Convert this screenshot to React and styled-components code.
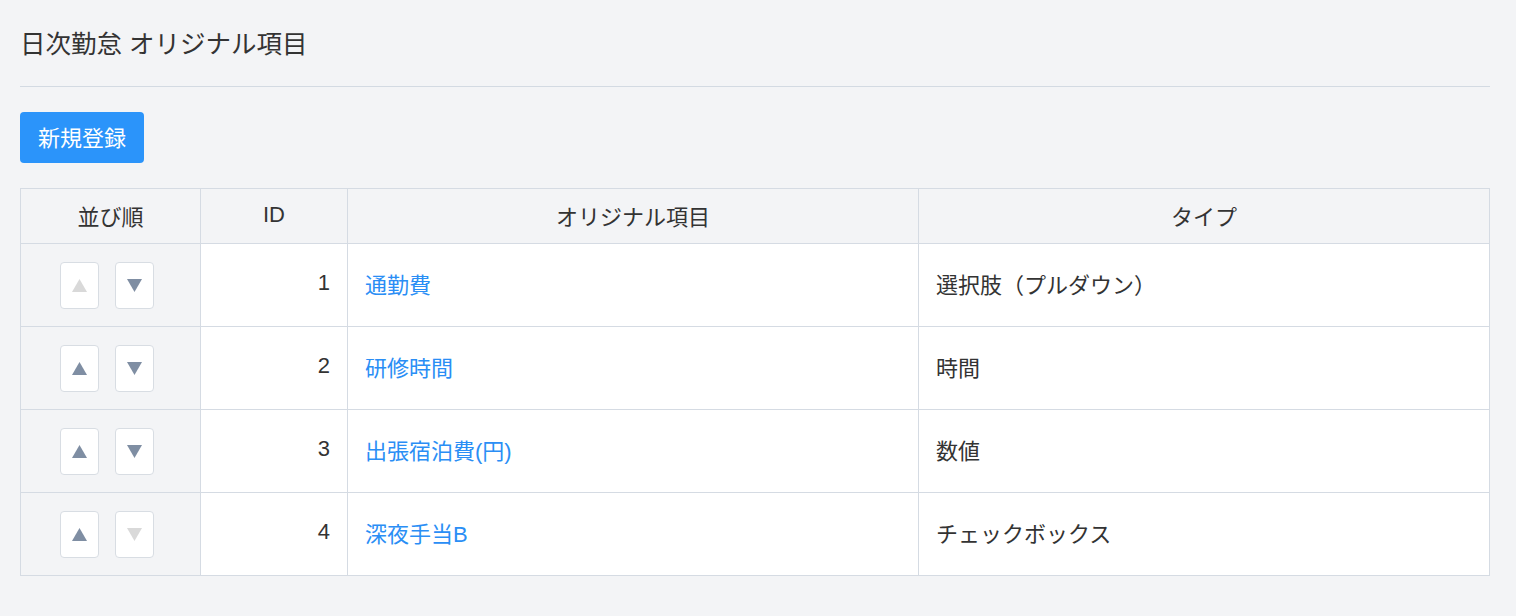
import React from "react";
import styled, { createGlobalStyle } from "styled-components";

const GlobalStyle = createGlobalStyle`
	body {
		margin: 0;
		background: #f3f4f6;
		color: #333;
		font-family: "Liberation Sans", "Noto Sans CJK JP", sans-serif;
	}
`;

const Page = styled.div`
	padding: 26px 26px 40px 20px;
`;

const Title = styled.h1`
	margin: 0;
	font-size: 25.5px;
	font-weight: 400;
	line-height: 36px;
	color: #333;
`;

const Divider = styled.hr`
	margin: 24px 0 25px;
	border: 0;
	border-top: 1px solid #d3dae2;
`;

const PrimaryButton = styled.button`
	height: 51px;
	padding: 0 18px 3px;
	border: 0;
	border-radius: 4px;
	background: #2b94fa;
	color: #fff;
	font-family: inherit;
	font-size: 22px;
	cursor: pointer;
`;

const Table = styled.table`
	margin-top: 25px;
	width: 100%;
	table-layout: fixed;
	border-collapse: collapse;
	font-size: 22px;
`;

const Th = styled.th`
	height: 52px;
	padding: 0 16px 2px;
	border: 1px solid #d5dbe3;
	background: #f3f4f6;
	font-weight: 400;
	text-align: center;
`;

const Td = styled.td`
	height: 78px;
	padding: 0 17px 4px;
	border: 1px solid #d5dbe3;
	background: ${(p) => (p.$muted ? "#f3f4f6" : "#fff")};
	text-align: ${(p) => p.$align || "left"};
`;

const SortButtons = styled.div`
	display: flex;
	justify-content: center;
	gap: 16px;
	padding-right: 7px;
	margin-top: 4px;
`;

const SortButton = styled.button`
	width: 39px;
	height: 47px;
	padding: 0;
	display: flex;
	align-items: center;
	justify-content: center;
	background: #fff;
	border: 1px solid #d8dde3;
	border-radius: 4px;
	color: ${(p) => (p.disabled ? "#d9d9d9" : "#7f8ea3")};
	cursor: ${(p) => (p.disabled ? "default" : "pointer")};
`;

const Link = styled.a`
	color: #2a8ef5;
	text-decoration: none;
`;

const Arrow = ({ down }) => (
	<svg width="15" height="13" viewBox="0 0 15 13">
		<path
			d={down ? "M0 0 H15 L7.5 13 Z" : "M7.5 0 L15 13 H0 Z"}
			fill="currentColor"
		/>
	</svg>
);

const items = [
	{ id: 1, name: "通勤費", type: "選択肢（プルダウン）" },
	{ id: 2, name: "研修時間", type: "時間" },
	{ id: 3, name: "出張宿泊費(円)", type: "数値" },
	{ id: 4, name: "深夜手当B", type: "チェックボックス" },
];

function App() {
	return (
		<Page>
			<GlobalStyle />
			<Title>日次勤怠 オリジナル項目</Title>
			<Divider />
			<PrimaryButton>新規登録</PrimaryButton>
			<Table>
				<colgroup>
					<col style={{ width: 180 }} />
					<col style={{ width: 147 }} />
					<col style={{ width: 571 }} />
					<col />
				</colgroup>
				<thead>
					<tr>
						<Th>並び順</Th>
						<Th>ID</Th>
						<Th>オリジナル項目</Th>
						<Th>タイプ</Th>
					</tr>
				</thead>
				<tbody>
					{items.map((item, i) => (
						<tr key={item.id}>
							<Td $muted>
								<SortButtons>
									<SortButton disabled={i === 0}>
										<Arrow />
									</SortButton>
									<SortButton disabled={i === items.length - 1}>
										<Arrow down />
									</SortButton>
								</SortButtons>
							</Td>
							<Td $align="right">{item.id}</Td>
							<Td>
								<Link href="#">{item.name}</Link>
							</Td>
							<Td>{item.type}</Td>
						</tr>
					))}
				</tbody>
			</Table>
		</Page>
	);
}

export default App;
